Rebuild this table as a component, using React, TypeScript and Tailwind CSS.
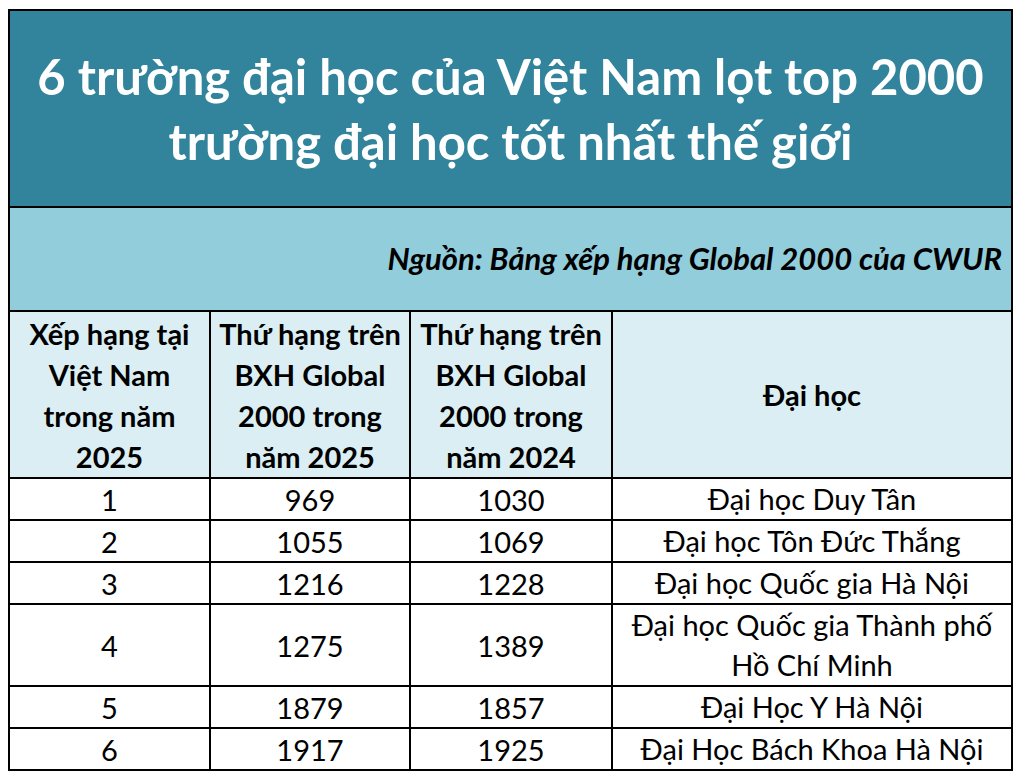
const rows = [
  { vn: "1", y25: "969", y24: "1030", name: ["Đại học Duy Tân"] },
  { vn: "2", y25: "1055", y24: "1069", name: ["Đại học Tôn Đức Thắng"] },
  { vn: "3", y25: "1216", y24: "1228", name: ["Đại học Quốc gia Hà Nội"] },
  { vn: "4", y25: "1275", y24: "1389", name: ["Đại học Quốc gia Thành phố", "Hồ Chí Minh"] },
  { vn: "5", y25: "1879", y24: "1857", name: ["Đại Học Y Hà Nội"] },
  { vn: "6", y25: "1917", y24: "1925", name: ["Đại Học Bách Khoa Hà Nội"] },
];

const headers = [
  ["Xếp hạng tại", "Việt Nam", "trong năm", "2025"],
  ["Thứ hạng trên", "BXH Global", "2000 trong", "năm 2025"],
  ["Thứ hạng trên", "BXH Global", "2000 trong", "năm 2024"],
  ["Đại học"],
];

const App = () => {
  return (
    <div className="w-[1020px] h-[780px] bg-white pl-[8px] pt-[9px] font-['Lato','Noto_Sans',sans-serif] text-black">
      <table className="border-collapse border-2 border-black table-fixed w-[1003px]">
        <colgroup>
          <col className="w-[201px]" />
          <col className="w-[200px]" />
          <col className="w-[202px]" />
          <col className="w-[400px]" />
        </colgroup>
        <tbody>
          <tr>
            <td
              colSpan={4}
              className="h-[197px] bg-[#31849b] border-2 border-black text-center text-white font-bold text-[49px] leading-[65px]"
            >
              6 trường đại học của Việt Nam lọt top 2000
              <br />
              trường đại học tốt nhất thế giới
            </td>
          </tr>
          <tr>
            <td
              colSpan={4}
              className="h-[104px] bg-[#92cddc] border-2 border-black text-right pr-[9px] pb-[2px] font-bold italic text-[31px]"
            >
              Nguồn: Bảng xếp hạng Global 2000 của CWUR
            </td>
          </tr>
          <tr>
            {headers.map((h, i) => (
              <td
                key={i}
                className="h-[167px] bg-[#daeef3] border-2 border-black text-center font-bold text-[29px] leading-[41px] whitespace-nowrap"
              >
                {h.map((line, j) => (
                  <div key={j}>{line}</div>
                ))}
              </td>
            ))}
          </tr>
          {rows.map((r) => (
            <tr key={r.vn} className={r.name.length > 1 ? "h-[82px]" : "h-[41px]"}>
              <td className="border-2 border-black text-center text-[29px] leading-[39px]">{r.vn}</td>
              <td className="border-2 border-black text-center text-[29px] leading-[39px]">{r.y25}</td>
              <td className="border-2 border-black text-center text-[29px] leading-[39px]">{r.y24}</td>
              <td className="border-2 border-black text-center text-[29px] leading-[40px] whitespace-nowrap">
                {r.name.map((line, j) => (
                  <div key={j}>{line}</div>
                ))}
              </td>
            </tr>
          ))}
        </tbody>
      </table>
    </div>
  );
};

export default App;
